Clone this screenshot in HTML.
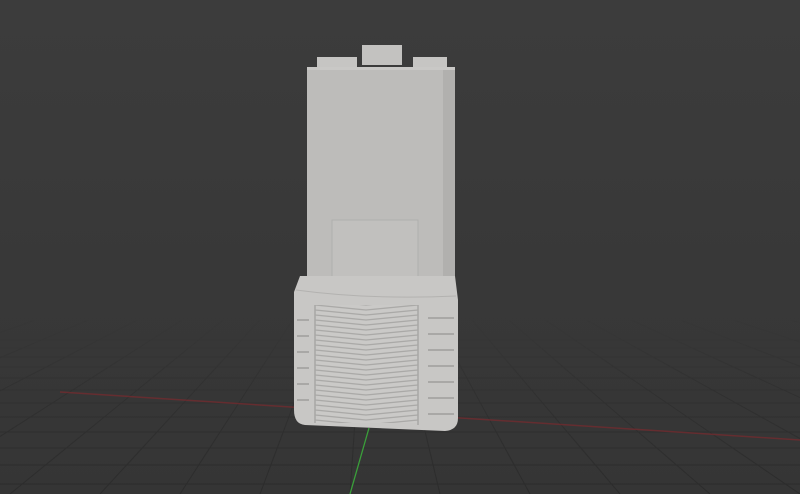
<!DOCTYPE html>
<html><head><style>
html,body{margin:0;padding:0;width:800px;height:494px;overflow:hidden;background:#3a3a3a}
</style></head><body>
<svg width="800" height="494" viewBox="0 0 800 494" xmlns="http://www.w3.org/2000/svg">
<defs>
<linearGradient id="bg" x1="0" y1="0" x2="0" y2="1">
<stop offset="0" stop-color="#3c3c3c"/><stop offset="1" stop-color="#353535"/>
</linearGradient>
<linearGradient id="fade" x1="0" y1="0" x2="0" y2="1">
<stop offset="0" stop-color="#fff" stop-opacity="0"/><stop offset="0.4" stop-color="#fff" stop-opacity="0.45"/><stop offset="1" stop-color="#fff" stop-opacity="0.8"/>
</linearGradient>
<mask id="m"><rect x="0" y="320" width="800" height="174" fill="url(#fade)"/></mask>
<pattern id="chev" x="315" y="300" width="103" height="5" patternUnits="userSpaceOnUse">
<rect width="103" height="5" fill="#cac9c7"/>
<path d="M0 0 L51 5 L103 0" stroke="#aaa9a7" stroke-width="1.3" fill="none"/>
<path d="M0 5 L51 10 L103 5" stroke="#aaa9a7" stroke-width="1.3" fill="none"/>
<path d="M0 -5 L51 0 L103 -5" stroke="#aaa9a7" stroke-width="1.3" fill="none"/>
</pattern>
</defs>
<rect width="800" height="494" fill="url(#bg)"/>
<g mask="url(#m)" stroke="#2a2a2a" stroke-width="1" fill="none">
<path d="M0 340H800M0 348H800M0 357H800M0 367H800M0 378H800M0 390H800M0 403H800M0 417H800M0 432H800M0 448H800M0 465H800M0 484H800"/>
<path d="M370 200L-600 494M370 200L-450 494M370 200L-320 494M370 200L-200 494M370 200L-90 494M370 200L10 494M370 200L100 494M370 200L180 494M370 200L260 494M370 200L350 494M370 200L440 494M370 200L530 494M370 200L620 494M370 200L710 494M370 200L800 494M370 200L900 494M370 200L1010 494M370 200L1130 494M370 200L1260 494M370 200L1400 494"/>
</g>
<path d="M60 392 L800 440" stroke="#7a2a2e" stroke-width="1.5" opacity="0.7"/>
<path d="M369 428 L350 494" stroke="#3aa03a" stroke-width="1.3"/>
<rect x="362" y="45" width="40" height="20" fill="#c3c2c0"/>
<rect x="317" y="57" width="40" height="11" fill="#c6c5c3"/>
<rect x="413" y="57" width="34" height="11" fill="#c6c5c3"/>
<rect x="307" y="67" width="148" height="215" fill="#bdbcba"/>
<rect x="443" y="70" width="12" height="212" fill="#b1b0ae"/>
<rect x="307" y="67" width="148" height="3" fill="#c9c8c6"/>
<rect x="332" y="220" width="86" height="67" fill="#c1c0be" stroke="#b0afad"/>
<path d="M300 276 L455 276 L458 300 L458 418 Q458 430 445 431 L305 425 Q294 424 294 410 L294 292 Z" fill="#c8c7c5"/>
<path d="M296 290 Q370 300 456 296" stroke="#b3b2b0" fill="none"/>
<rect x="315" y="305" width="103" height="118" fill="url(#chev)"/>
<path d="M315 305V423M418 305V425" stroke="#a8a7a5" stroke-width="1.5"/>
<g stroke="#a9a8a6" stroke-width="2">
<path d="M297 320h12M297 336h12M297 352h12M297 368h12M297 384h12M297 400h12"/>
<path d="M428 318h26M428 334h26M428 350h26M428 366h26M428 382h26M428 398h26M428 414h26"/>
</g>
</svg>
</body></html>
